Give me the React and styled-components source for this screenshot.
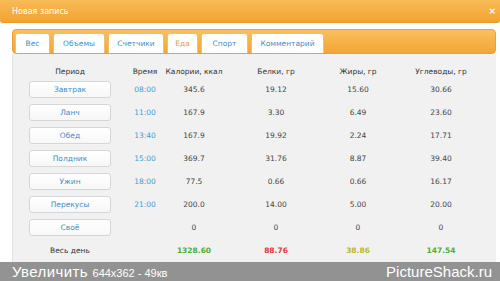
import React from "react";
import styled, { createGlobalStyle } from "styled-components";

const Global = createGlobalStyle`
  html, body { margin: 0; padding: 0; background: #f4f4f4; }
  body { font-family: "DejaVu Sans", Verdana, sans-serif; width: 500px; height: 281px; overflow: hidden; }
  #root { width: 500px; height: 281px; position: relative; }
`;

const Dialog = styled.div`
  width: 500px;
  height: 281px;
  display: flex;
  flex-direction: column;
  background: #fff;
`;

const Header = styled.div`
  height: 22px;
  flex: none;
  display: flex;
  align-items: center;
  justify-content: space-between;
  padding: 0 4px 0 12px;
  background: linear-gradient(#f8bb55, #f2a331);
  border-bottom: 1px solid #e59a2c;
  border-radius: 0 0 3px 3px;
  color: #fff;
  font-size: 8px;
`;

const Close = styled.span`
  font-weight: bold;
  font-size: 9px;
  color: #fff;
`;

const Body = styled.div`
  flex: 1;
  display: flex;
  flex-direction: column;
  padding: 6px 4px 0 12px;
  background: #fff;
`;

const TabBar = styled.div`
  height: 23px;
  display: flex;
  align-items: flex-end;
  gap: 3px;
  padding: 0 2px;
  background: linear-gradient(#f9c060, #f3a535);
  border: 1px solid #eaa038;
  border-radius: 4px;
`;

const Tab = styled.div`
  width: ${(p) => p.$w}px;
  height: 20px;
  box-sizing: border-box;
  display: flex;
  align-items: center;
  justify-content: center;
  background: #fff;
  border: 1px solid #f0c070;
  border-bottom: none;
  border-radius: 3px 3px 0 0;
  color: ${(p) => (p.$active ? "#f0a030" : "#3d8fc4")};
  font-size: 7.5px;
`;

const Content = styled.div`
  flex: 1;
  background: #f1f1f1;
  border-left: 1px solid #e2e2e2;
  padding-top: 10px;
`;

const Grid = styled.div`
  display: grid;
  grid-template-columns: 114px 36px 62px 102px 62px 104px;
  grid-template-rows: 14px;
  grid-auto-rows: 23px;
  align-items: center;
  justify-items: center;
  font-size: 7.5px;
  color: #444;
`;

const HeadCell = styled.div`
  color: #333;
  font-size: 7.5px;
`;

const PeriodBtn = styled.div`
  width: 82px;
  height: 17px;
  box-sizing: border-box;
  display: flex;
  align-items: center;
  justify-content: center;
  background: linear-gradient(#ffffff, #f7f7f7);
  border: 1px solid #d6d6d6;
  border-radius: 3px;
  color: #3d8fc4;
  font-size: 7.5px;
`;

const Time = styled.div`
  color: #4a9bd0;
`;

const Cell = styled.div`
  color: ${(p) => p.$color || "#444"};
  font-weight: ${(p) => (p.$bold ? "bold" : "normal")};
`;

const Overlay = styled.div`
  position: absolute;
  left: 0;
  right: 0;
  bottom: 0;
  height: 19px;
  background: rgba(138, 138, 138, 0.92);
  display: flex;
  align-items: center;
  justify-content: space-between;
  padding: 0 8px 0 12px;
  color: #fff;
  font-family: "Liberation Sans", Arial, sans-serif;
`;

const OverlayLeft = styled.span`
  font-size: 15px;
  letter-spacing: 0.4px;
  & small { font-size: 11px; letter-spacing: 0; }
`;

const OverlayRight = styled.span`
  font-size: 15px;
`;

const tabs = [
  ["Вес", 35],
  ["Объемы", 52],
  ["Счетчики", 56],
  ["Еда", 31, true],
  ["Спорт", 47],
  ["Комментарий", 73],
];

const rows = [
  ["Завтрак", "08:00", "345.6", "19.12", "15.60", "30.66"],
  ["Ланч", "11:00", "167.9", "3.30", "6.49", "23.60"],
  ["Обед", "13:40", "167.9", "19.92", "2.24", "17.71"],
  ["Полдник", "15:00", "369.7", "31.76", "8.87", "39.40"],
  ["Ужин", "18:00", "77.5", "0.66", "0.66", "16.17"],
  ["Перекусы", "21:00", "200.0", "14.00", "5.00", "20.00"],
  ["Своё", "", "0", "0", "0", "0"],
];

export default function App() {
  return (
    <>
      <Global />
      <Dialog>
        <Header>
          <span>Новая запись</span>
          <Close>×</Close>
        </Header>
        <Body>
          <TabBar>
            {tabs.map(([t, w, active]) => (
              <Tab key={t} $w={w} $active={active}>
                {t}
              </Tab>
            ))}
          </TabBar>
          <Content>
            <Grid>
              <HeadCell>Период</HeadCell>
              <HeadCell>Время</HeadCell>
              <HeadCell>Калории, ккал</HeadCell>
              <HeadCell>Белки, гр</HeadCell>
              <HeadCell>Жиры, гр</HeadCell>
              <HeadCell>Углеводы, гр</HeadCell>
              {rows.map((r) => (
                <React.Fragment key={r[0]}>
                  <PeriodBtn>{r[0]}</PeriodBtn>
                  <Time>{r[1]}</Time>
                  <Cell>{r[2]}</Cell>
                  <Cell>{r[3]}</Cell>
                  <Cell>{r[4]}</Cell>
                  <Cell>{r[5]}</Cell>
                </React.Fragment>
              ))}
              <Cell $color="#333">Весь день</Cell>
              <Cell />
              <Cell $bold $color="#4caf3a">1328.60</Cell>
              <Cell $bold $color="#e03838">88.76</Cell>
              <Cell $bold $color="#b8b830">38.86</Cell>
              <Cell $bold $color="#4caf3a">147.54</Cell>
            </Grid>
          </Content>
        </Body>
      </Dialog>
      <Overlay>
        <OverlayLeft>
          Увеличить <small>644x362 - 49кв</small>
        </OverlayLeft>
        <OverlayRight>PictureShack.ru</OverlayRight>
      </Overlay>
    </>
  );
}
